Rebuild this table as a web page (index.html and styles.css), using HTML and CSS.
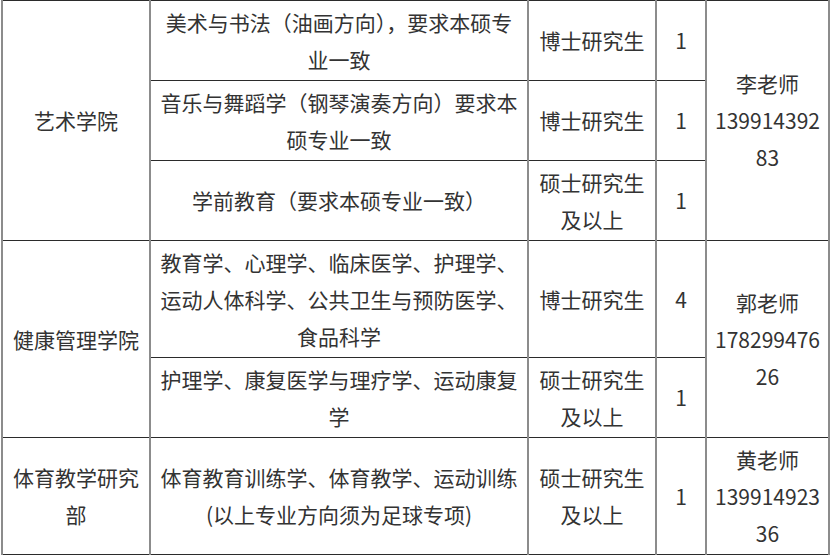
FILE: index.html
```html
<!DOCTYPE html>
<html lang="zh-CN">
<head>
<meta charset="utf-8">
<link rel="stylesheet" href="styles.css">
</head>
<body>
<table class="jobs">
  <colgroup>
    <col class="c-dept">
    <col class="c-major">
    <col class="c-degree">
    <col class="c-num">
    <col class="c-contact">
  </colgroup>
  <tbody>
    <tr class="r80">
      <td rowspan="3">艺术学院</td>
      <td>美术与书法（油画方向），要求本硕专业一致</td>
      <td>博士研究生</td>
      <td>1</td>
      <td rowspan="3" class="contact">李老师<br>13991439283</td>
    </tr>
    <tr class="r80">
      <td>音乐与舞蹈学（钢琴演奏方向）要求本硕专业一致</td>
      <td>博士研究生</td>
      <td>1</td>
    </tr>
    <tr class="r80">
      <td>学前教育（要求本硕专业一致）</td>
      <td>硕士研究生及以上</td>
      <td>1</td>
    </tr>
    <tr class="r117">
      <td rowspan="2">健康管理学院</td>
      <td>教育学、心理学、临床医学、护理学、运动人体科学、公共卫生与预防医学、食品科学</td>
      <td>博士研究生</td>
      <td>4</td>
      <td rowspan="2" class="contact">郭老师<br>17829947626</td>
    </tr>
    <tr class="r80">
      <td>护理学、康复医学与理疗学、运动康复学</td>
      <td>硕士研究生及以上</td>
      <td>1</td>
    </tr>
    <tr class="r117">
      <td>体育教学研究部</td>
      <td>体育教育训练学、体育教学、运动训练(以上专业方向须为足球专项)</td>
      <td>硕士研究生及以上</td>
      <td>1</td>
      <td class="contact">黄老师<br>13991492336</td>
    </tr>
  </tbody>
</table>
</body>
</html>
```
FILE: styles.css
```css
html, body {
  margin: 0;
  padding: 0;
  background: #ffffff;
}
.jobs {
  border-collapse: collapse;
  table-layout: fixed;
  width: 829px;
  margin-left: 1px;
  font-family: "Noto Sans CJK SC", "Noto Sans", sans-serif;
  font-size: 21px;
  line-height: 37px;
  color: #333333;
}
.c-dept { width: 148px; }
.c-major { width: 378px; }
.c-degree { width: 128px; }
.c-num { width: 50px; }
.c-contact { width: 123px; }
.jobs td {
  border-left: 2px solid #8c8c8c;
  border-right: 2px solid #8c8c8c;
  border-top: 1px solid #2b2b2b;
  border-bottom: 1px solid #2b2b2b;
  padding: 0 5px;
  text-align: center;
  vertical-align: middle;
  word-break: break-all;
}
.r80 { height: 80px; }
.r117 { height: 117px; }
```
